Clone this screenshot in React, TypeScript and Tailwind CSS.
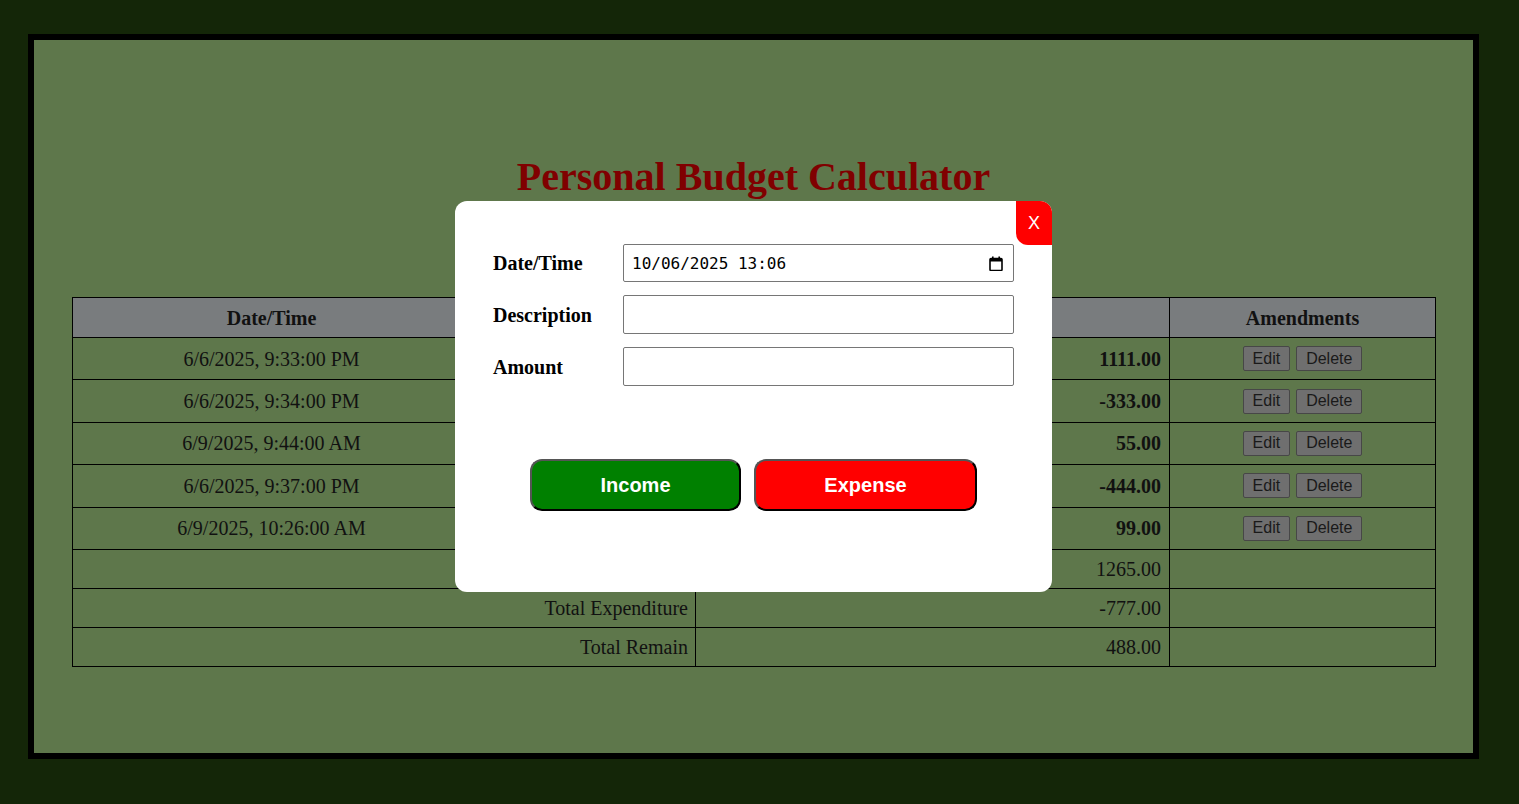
import React from "react";

const rows = [
  { dt: "6/6/2025, 9:33:00 PM", desc: "Salary", amt: "1111.00" },
  { dt: "6/6/2025, 9:34:00 PM", desc: "Groceries", amt: "-333.00" },
  { dt: "6/9/2025, 9:44:00 AM", desc: "Gift", amt: "55.00" },
  { dt: "6/6/2025, 9:37:00 PM", desc: "Rent", amt: "-444.00" },
  { dt: "6/9/2025, 10:26:00 AM", desc: "Bonus", amt: "99.00" },
];

const serif = { fontFamily: '"Liberation Serif", "Times New Roman", serif' };

export default function App() {
  return (
    <div className="relative min-h-screen bg-[#142608] pt-[34px] pb-[45px]" style={serif}>
      <div className="ml-[28px] w-[1451px] h-[725px] border-[6px] border-black bg-[#5e774b] px-[38px] pt-[117px] box-border">
        <h1 className="text-center text-[40px] leading-[40px] font-bold text-[#800000] mb-[100px]">
          Personal Budget Calculator
        </h1>
        <table className="w-[1363px] border-collapse text-[20px] text-[#111]" style={{ tableLayout: "fixed" }}>
          <colgroup>
            <col className="w-[398px]" />
            <col className="w-[225px]" />
            <col className="w-[474px]" />
            <col className="w-[266px]" />
          </colgroup>
          <thead>
            <tr className="h-[40px] bg-[#797c7e]">
              <th className="border border-black font-bold">Date/Time</th>
              <th className="border border-black font-bold">Description</th>
              <th className="border border-black font-bold">Amount</th>
              <th className="border border-black font-bold">Amendments</th>
            </tr>
          </thead>
          <tbody>
            {rows.map((r, i) => (
              <tr key={i} className="h-[42.4px]">
                <td className="border border-black text-center">{r.dt}</td>
                <td className="border border-black text-center">{r.desc}</td>
                <td className="border border-black text-right pr-[8px] font-bold">{r.amt}</td>
                <td className="border border-black text-center">
                  <div className="flex justify-center gap-[6px]" style={{ fontFamily: '"Liberation Sans", Arial, sans-serif' }}>
                    <button className="h-[25px] px-[9px] text-[16px] leading-none text-[#1a1a1a] bg-[#6f6f6f] border border-[#474747] rounded-[2px]">
                      Edit
                    </button>
                    <button className="h-[25px] px-[9px] text-[16px] leading-none text-[#1a1a1a] bg-[#6f6f6f] border border-[#474747] rounded-[2px]">
                      Delete
                    </button>
                  </div>
                </td>
              </tr>
            ))}
            {[
              ["Total Income", "1265.00"],
              ["Total Expenditure", "-777.00"],
              ["Total Remain", "488.00"],
            ].map(([label, val]) => (
              <tr key={label} className="h-[39px]">
                <td colSpan={2} className="border border-black text-right pr-[7px]">{label}</td>
                <td className="border border-black text-right pr-[8px]">{val}</td>
                <td className="border border-black"></td>
              </tr>
            ))}
          </tbody>
        </table>
      </div>

      <div className="absolute left-[455px] top-[201px] w-[597px] h-[391px] bg-white rounded-[12px] px-[38px] pt-[43px]">
        <button
          className="absolute right-0 top-0 w-[36px] h-[44px] bg-[#ff0000] text-white text-[18px] rounded-tr-[12px] rounded-bl-[12px] flex items-center justify-center"
          style={{ fontFamily: '"Liberation Sans", Arial, sans-serif' }}
        >
          X
        </button>
        <div className="flex flex-col gap-[13px]">
          <div className="flex items-center">
            <label className="w-[130px] text-[20px] font-bold text-black">Date/Time</label>
            <div className="relative">
              <input
                type="text"
                readOnly
                value="10/06/2025 13:06"
                className="w-[391px] h-[38px] border border-[#767676] rounded-[2px] pl-[8px] pt-[1px] text-[16px] text-black outline-none"
                style={{ fontFamily: '"DejaVu Sans Mono", monospace' }}
              />
              <svg
                className="absolute right-[11px] top-[12px]"
                width="14"
                height="15"
                viewBox="0 0 14 15"
                fill="none"
              >
                <rect x="1" y="2.5" width="12" height="12" rx="1" stroke="black" strokeWidth="1.6" />
                <rect x="1" y="2.5" width="12" height="3" fill="black" />
                <rect x="3" y="0.5" width="1.6" height="3" fill="black" />
                <rect x="9.4" y="0.5" width="1.6" height="3" fill="black" />
              </svg>
            </div>
          </div>
          <div className="flex items-center">
            <label className="w-[130px] text-[20px] font-bold text-black">Description</label>
            <input type="text" className="w-[391px] h-[39px] border border-[#767676] rounded-[2px] px-[8px] text-[16px]" />
          </div>
          <div className="flex items-center">
            <label className="w-[130px] text-[20px] font-bold text-black">Amount</label>
            <input type="text" className="w-[391px] h-[39px] border border-[#767676] rounded-[2px] px-[8px] text-[16px]" />
          </div>
        </div>
        <div className="flex justify-center gap-[13px] mt-[73px]" style={{ fontFamily: '"Liberation Sans", Arial, sans-serif' }}>
          <button className="w-[211px] h-[52px] bg-[#008000] text-white text-[20px] font-bold rounded-[12px] border-2 border-t-[#555] border-l-[#555] border-b-black border-r-black">
            Income
          </button>
          <button className="w-[223px] h-[52px] bg-[#ff0000] text-white text-[20px] font-bold rounded-[12px] border-2 border-t-[#555] border-l-[#555] border-b-black border-r-black">
            Expense
          </button>
        </div>
      </div>
    </div>
  );
}
